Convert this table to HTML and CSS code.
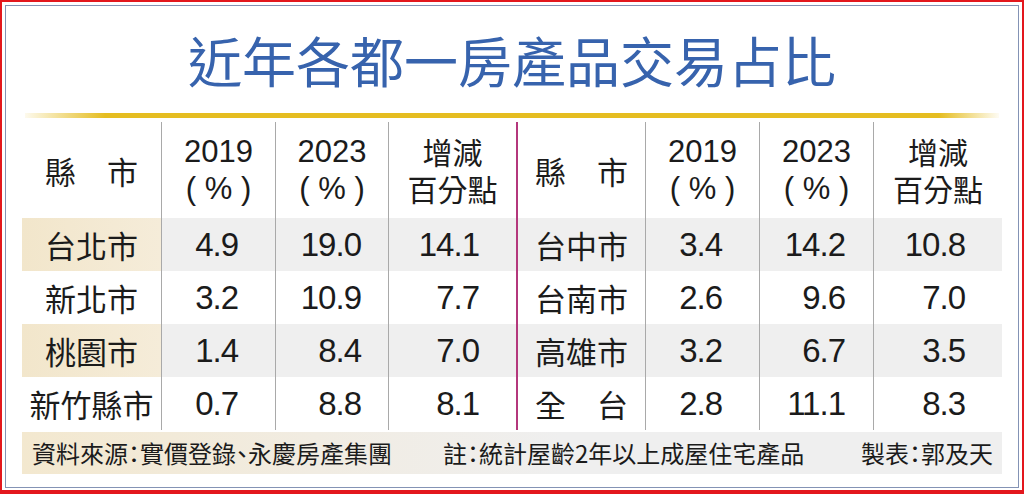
FILE: index.html
```html
<!DOCTYPE html>
<html lang="zh-Hant">
<head>
<meta charset="utf-8">
<title>近年各都一房產品交易占比</title>
<link rel="stylesheet" href="styles.css">
</head>
<body>
<div class="frame">
  <div class="inner">
    <h1 class="title">近年各都一房產品交易占比</h1>
    <div class="rule"></div>
    <div class="table">
      <div class="row head">
        <div class="c city">縣　市</div>
        <div class="c hd"><span class="num">2019</span><span class="num">( % )</span></div>
        <div class="c hd"><span class="num">2023</span><span class="num">( % )</span></div>
        <div class="c hd"><span class="two">增減<br>百分點</span></div>
        <div class="c city">縣　市</div>
        <div class="c hd"><span class="num">2019</span><span class="num">( % )</span></div>
        <div class="c hd"><span class="num">2023</span><span class="num">( % )</span></div>
        <div class="c hd"><span class="two">增減<br>百分點</span></div>
      </div>
      <div class="row alt">
        <div class="c city">台北市</div>
        <div class="c n n2">4.9</div>
        <div class="c n n3">19.0</div>
        <div class="c n n4">14.1</div>
        <div class="c city">台中市</div>
        <div class="c n n2">3.4</div>
        <div class="c n n3">14.2</div>
        <div class="c n n4">10.8</div>
      </div>
      <div class="row">
        <div class="c city">新北市</div>
        <div class="c n n2">3.2</div>
        <div class="c n n3">10.9</div>
        <div class="c n n4">7.7</div>
        <div class="c city">台南市</div>
        <div class="c n n2">2.6</div>
        <div class="c n n3">9.6</div>
        <div class="c n n4">7.0</div>
      </div>
      <div class="row alt">
        <div class="c city">桃園市</div>
        <div class="c n n2">1.4</div>
        <div class="c n n3">8.4</div>
        <div class="c n n4">7.0</div>
        <div class="c city">高雄市</div>
        <div class="c n n2">3.2</div>
        <div class="c n n3">6.7</div>
        <div class="c n n4">3.5</div>
      </div>
      <div class="row">
        <div class="c city">新竹縣市</div>
        <div class="c n n2">0.7</div>
        <div class="c n n3">8.8</div>
        <div class="c n n4">8.1</div>
        <div class="c city">全　台</div>
        <div class="c n n2">2.8</div>
        <div class="c n n3">11.1</div>
        <div class="c n n4">8.3</div>
      </div>
    </div>
    <div class="foot">
      <span class="src">資料來源：實價登錄、永慶房產集團</span>
      <span class="note">註：統計屋齡2年以上成屋住宅產品</span>
      <span class="maker">製表：郭及天</span>
    </div>
  </div>
</div>
</body>
</html>
```

FILE: styles.css
```css
html, body {
  margin: 0;
  padding: 0;
  background: #ffffff;
}

.frame {
  width: 1024px;
  height: 494px;
  box-sizing: border-box;
  border: 2px solid #e3171d;
  border-bottom-width: 4px;
  padding: 3px 3px 2px 3px;
  font-family: "Noto Sans CJK TC", "Liberation Sans", sans-serif;
  color: #1b1b1b;
}

.inner {
  height: 100%;
  box-sizing: border-box;
  border: 1px solid #8493b5;
  padding: 0 16px;
}

.title {
  margin: 0;
  padding-top: 4px;
  height: 100px;
  line-height: 100px;
  text-align: center;
  font-size: 54px;
  font-weight: 400;
  color: #3763ad;
  font-family: "Noto Sans CJK TC", sans-serif;
}

.rule {
  height: 5px;
  margin: 3px 3px 0 3px;
  background: linear-gradient(to right,
    rgba(229, 189, 33, 0.08) 0,
    #e5bd21 80px,
    #e5bd21 calc(100% - 60px),
    rgba(229, 189, 33, 0.05) 100%);
}

.table {
  margin-top: 4px;
}

.row {
  display: grid;
  grid-template-columns: 139px 114px 113px 128px 129px 114px 114px 129px;
  height: 53px;
}

.row.head {
  height: 96px;
}

.c {
  display: flex;
  align-items: center;
  box-sizing: border-box;
  line-height: 1;
}

.c + .c {
  border-left: 1px solid #a9a9a9;
}

.row .c:nth-child(5) {
  border-left: 2px solid #b4377c;
}

.row.alt .c {
  background: #efefef;
}

.row.alt .c:first-child {
  background: linear-gradient(to right, #f2e6cb, #f5ecd9);
}

.city {
  justify-content: center;
  font-size: 31px;
  white-space: nowrap;
}

.hd {
  flex-direction: column;
  justify-content: center;
  font-size: 30px;
}

.hd span {
  display: block;
  line-height: 37px;
  text-align: center;
}

.num {
  font-family: "Liberation Sans", Arial, sans-serif;
  font-size: 31px;
}

.n {
  justify-content: flex-end;
  font-family: "Liberation Sans", Arial, sans-serif;
  font-size: 33px;
  letter-spacing: -1px;
}

.n2 { padding-right: 37px; }
.n3 { padding-right: 27px; }
.n4 { padding-right: 37px; }
.row .c:nth-child(7) { padding-right: 28px; }
.row.head .c { padding-right: 0; }

.foot {
  margin-top: 2px;
  height: 42px;
  display: flex;
  align-items: center;
  padding: 0 9px 0 10px;
  font-size: 24px;
  line-height: 1;
  font-feature-settings: "palt";
  background: linear-gradient(to right, #f3e8cf 0%, #f1ece2 30%, #efefef 55%, #efefef 100%);
  white-space: nowrap;
}

.note {
  margin-left: 51px;
}

.maker {
  margin-left: auto;
}
```
